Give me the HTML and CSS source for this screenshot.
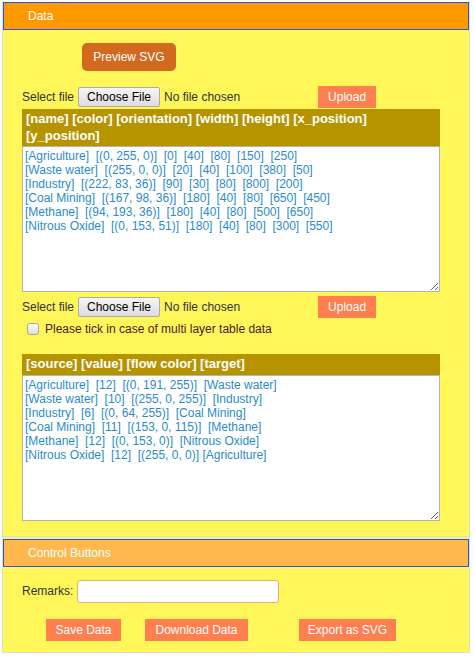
FILE: index.html
```html
<!DOCTYPE html>
<html>
<head>
<meta charset="utf-8">
<link rel="stylesheet" href="styles.css">
</head>
<body>
<div class="page">
  <section class="sec sec-data">
    <div class="head">Data</div>
    <div class="body">
      <button class="preview">Preview SVG</button>
      <div class="filerow">
        <span class="lbl">Select file</span>
        <button class="choose">Choose File</button>
        <span class="nofile">No file chosen</span>
        <button class="btn upload">Upload</button>
      </div>
      <div class="thead two">[name] [color] [orientation] [width] [height] [x_position] [y_position]</div>
      <textarea class="ta">[Agriculture]  [(0, 255, 0)]  [0]  [40]  [80]  [150]  [250]
[Waste water]  [(255, 0, 0)]  [20]  [40]  [100]  [380]  [50]
[Industry]  [(222, 83, 36)]  [90]  [30]  [80]  [800]  [200]
[Coal Mining]  [(167, 98, 36)]  [180]  [40]  [80]  [650]  [450]
[Methane]  [(94, 193, 36)]  [180]  [40]  [80]  [500]  [650]
[Nitrous Oxide]  [(0, 153, 51)]  [180]  [40]  [80]  [300]  [550]</textarea>
      <div class="filerow row2">
        <span class="lbl">Select file</span>
        <button class="choose">Choose File</button>
        <span class="nofile">No file chosen</span>
        <button class="btn upload">Upload</button>
      </div>
      <label class="chkrow"><input type="checkbox" class="chk"><span>Please tick in case of multi layer table data</span></label>
      <div class="thead one">[source] [value] [flow color] [target]</div>
      <textarea class="ta">[Agriculture]  [12]  [(0, 191, 255)]  [Waste water]
[Waste water]  [10]  [(255, 0, 255)]  [Industry]
[Industry]  [6]  [(0, 64, 255)]  [Coal Mining]
[Coal Mining]  [11]  [(153, 0, 115)]  [Methane]
[Methane]  [12]  [(0, 153, 0)]  [Nitrous Oxide]
[Nitrous Oxide]  [12]  [(255, 0, 0)] [Agriculture]</textarea>
    </div>
  </section>
  <section class="sec sec-ctrl">
    <div class="head head-light">Control Buttons</div>
    <div class="body body-ctrl">
      <div class="remrow">
        <span class="lbl">Remarks:</span>
        <input type="text" class="remarks">
      </div>
      <div class="btnrow">
        <button class="btn save">Save Data</button>
        <button class="btn download">Download Data</button>
        <button class="btn export">Export as SVG</button>
      </div>
    </div>
  </section>
</div>
</body>
</html>
```

FILE: styles.css
```css
html, body {
  margin: 0;
  padding: 0;
  background: #ffffff;
}
body {
  font-family: "Liberation Sans", Arial, sans-serif;
  font-size: 12px;
  color: #333333;
}
.page {
  margin: 2px 0 0 2px;
  width: 466px;
  border: 1px solid #dcdcdc;
  border-top: 0;
  background: #fff65a;
}
.sec-data {
  border-bottom: 1px solid #dcdcdc;
}
.sec-ctrl {
  margin-top: 2px;
}
.head {
  height: 26px;
  line-height: 26px;
  border: 1px solid #2352f5;
  background: #ff9900;
  color: #ffffff;
  padding-left: 24px;
  font-size: 12px;
}
.head-light {
  background: #ffb84d;
}
.body {
  padding: 13px 0 15px 19px;
}
button {
  font-family: "Liberation Sans", Arial, sans-serif;
  font-size: 12px;
  margin: 0;
  padding: 0;
  cursor: pointer;
}
.preview {
  display: block;
  margin-left: 60px;
  width: 94px;
  height: 28px;
  border: 0;
  border-radius: 5px;
  background: #d2691e;
  color: #ffffff;
}
.filerow {
  display: flex;
  align-items: center;
  height: 22px;
  margin-top: 15px;
}
.row2 {
  margin-top: 4px;
}
.lbl {
  color: #333333;
}
.choose {
  margin-left: 4px;
  width: 82px;
  height: 20px;
  border: 1px solid #ababab;
  border-radius: 2px;
  background: linear-gradient(#f6f6f6, #dddddd);
  color: #000000;
}
.nofile {
  margin-left: 4px;
  color: #333333;
}
.btn {
  height: 22px;
  border: 0;
  background: #ff7f50;
  color: #ffffff;
  text-align: center;
}
.upload {
  margin-left: 78px;
  width: 58px;
}
.thead {
  margin-top: 1px;
  width: 410px;
  padding: 2px 4px 2px 4px;
  background: #b59400;
  color: #ffffff;
  font-weight: bold;
  font-size: 13px;
  line-height: 16.5px;
}
.thead.one {
  margin-top: 16px;
}
.ta {
  display: block;
  box-sizing: border-box;
  width: 418px;
  height: 146px;
  margin: 0;
  padding: 2px;
  border: 1px solid #b4b4b4;
  background: #ffffff;
  color: #2a8ccc;
  font-family: "Liberation Sans", Arial, sans-serif;
  font-size: 12px;
  line-height: 14px;
  white-space: pre;
  overflow: hidden;
  resize: both;
  outline: none;
}
.chkrow {
  display: flex;
  align-items: center;
  margin-top: 2px;
  height: 18px;
  color: #4a2222;
}
.chk {
  appearance: none;
  -webkit-appearance: none;
  width: 12px;
  height: 12px;
  margin: 0 0 0 5px;
  border: 1px solid #a8a8a8;
  border-radius: 3px;
  background: linear-gradient(#ffffff, #dcdcdc);
}
.chkrow span {
  margin-left: 6px;
}
.body-ctrl {
  padding: 13px 0 11px 19px;
}
.remrow {
  display: flex;
  align-items: center;
  height: 23px;
}
.remarks {
  box-sizing: border-box;
  margin: 0 0 0 4px;
  width: 202px;
  height: 23px;
  border: 1px solid #f4a862;
  border-radius: 3px;
  background: #ffffff;
  padding: 0 4px;
  outline: none;
}
.btnrow {
  display: flex;
  margin-top: 16px;
}
.save {
  margin-left: 24px;
  width: 75px;
}
.download {
  margin-left: 24px;
  width: 103px;
}
.export {
  margin-left: 51px;
  width: 97px;
}
```
